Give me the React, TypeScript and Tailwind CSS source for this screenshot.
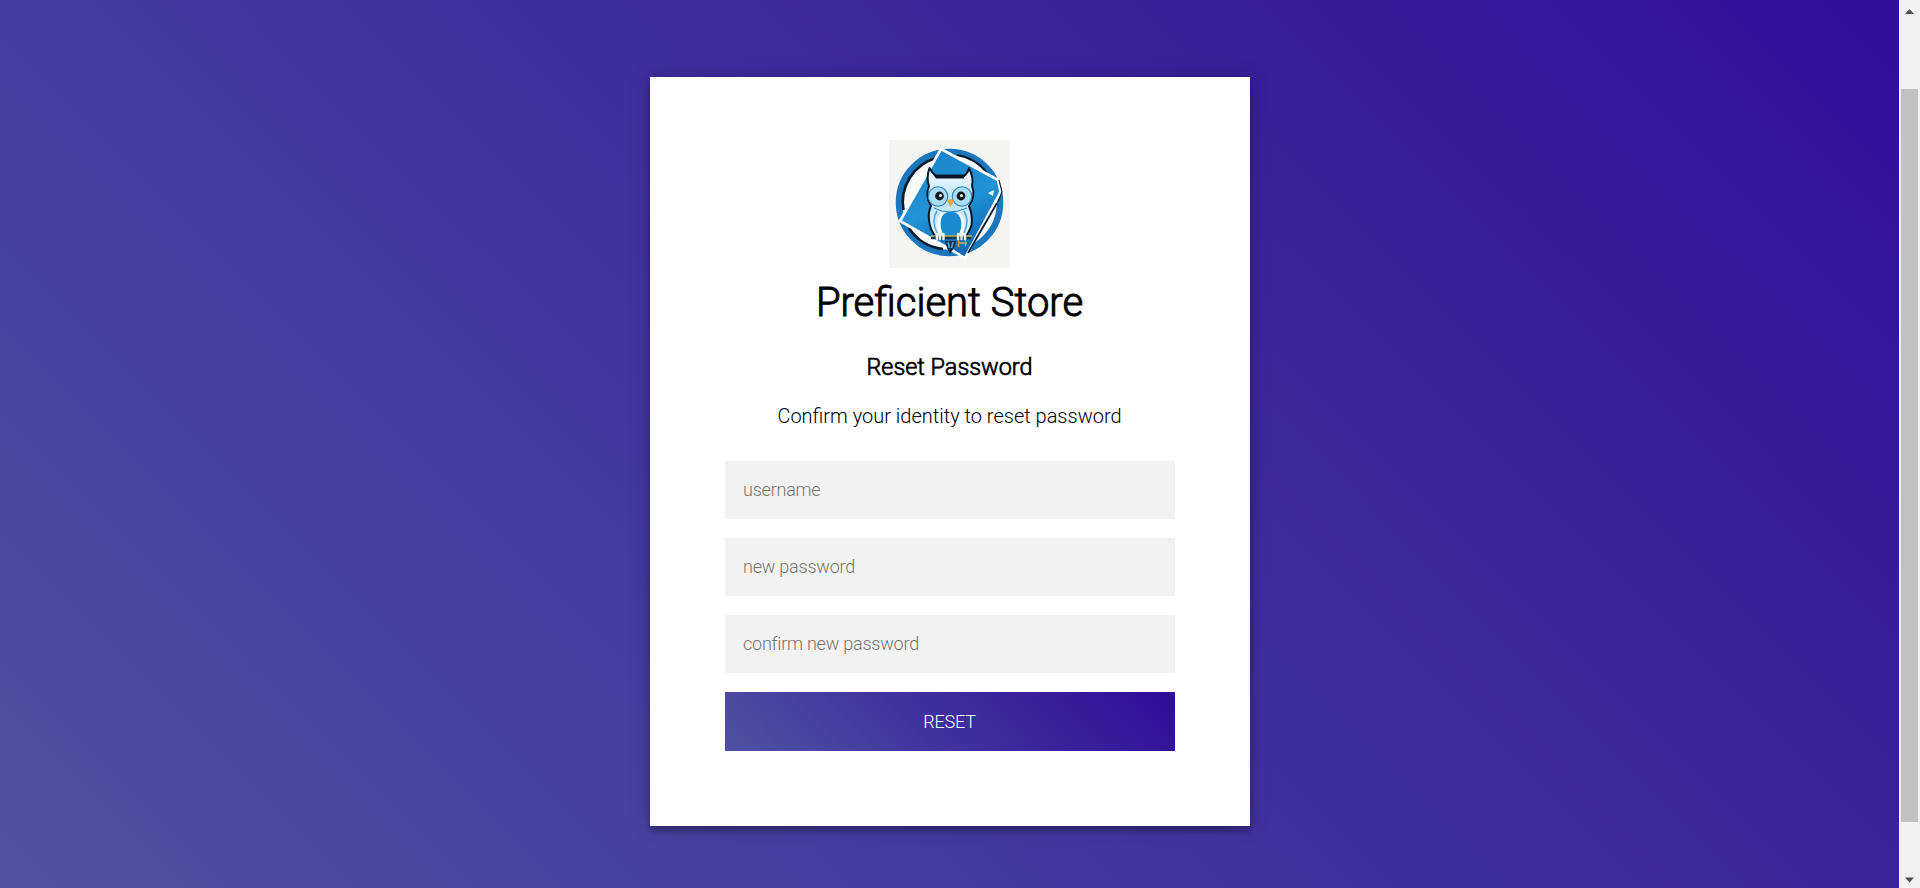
function Owl() {
  return (
    <svg viewBox="0 0 121 128" className="h-[128px] w-[121px] shrink-0" aria-hidden="true">
      <defs>
        <linearGradient id="card" x1="0.3" y1="0" x2="0.7" y2="1">
          <stop offset="0" stopColor="#1b84cc" />
          <stop offset="0.5" stopColor="#2193d6" />
          <stop offset="1" stopColor="#0d62ac" />
        </linearGradient>
        <linearGradient id="body" x1="0" y1="0" x2="0" y2="1">
          <stop offset="0" stopColor="#ffffff" />
          <stop offset="0.45" stopColor="#b5e2fa" />
          <stop offset="1" stopColor="#e8f7fe" />
        </linearGradient>
      </defs>
      <rect width="121" height="128" fill="#f4f4f2" />
      <circle cx="60.5" cy="62.5" r="50.5" fill="#fafafa" stroke="#1a76bd" strokeWidth="6.5" />
      <path d="M47 18 A46 46 0 0 0 14.500 70 M20 88 A46 46 0 0 0 54 109" fill="none" stroke="#0c1c2c" strokeWidth="2.6" />
      <path d="M68 15 A47 47 0 0 1 98 33" fill="none" stroke="#0c1c2c" strokeWidth="2" />
      <path d="M52 9 L109 40 L111.500 52 L76 118 L66 112 L11 81 Z" fill="url(#card)" stroke="#fff" strokeWidth="2.6" strokeLinejoin="round" />
      <path d="M108 63 L79 113" fill="none" stroke="#10202e" strokeWidth="1.8" />
      <path d="M110 40 L113 52 L109 62" fill="none" stroke="#10202e" strokeWidth="1.1" />
      <path d="M99 53 L105 50 L104 56 Z" fill="#e8f7fe" />
      <path d="M40.500 28 Q43 33 47 36 H75 Q79 33 80 28 Q85 38 83 46 Q87 56 80 66 Q84 75 82.500 85 Q80 93 76 97 L47 97 Q41 90 40 80 Q39 72 42 66 Q36 56 40 46 Q37 38 40.500 28 Z" fill="url(#body)" stroke="#0b1726" strokeWidth="2" strokeLinejoin="round" />
      <path d="M44 34.500 H77 L74.500 38.500 H47 Z" fill="#0b1726" />
      <path d="M45 68 Q60 76 78 68" fill="none" stroke="#2b7fb5" strokeWidth="1" />
      <path d="M53 76 Q62 67 71 76 Q75 87 69 96 H55 Q49 87 53 76 Z" fill="#1c8ad0" />
      <path d="M48 71 Q42 80 48 93 M75 71 Q81 80 75 93" fill="none" stroke="#4aa5dc" strokeWidth="1.5" />
      <path d="M53 73 Q47 82 52 93 M70 73 Q77 82 72 93" fill="none" stroke="#fff" strokeWidth="2.8" />
      <circle cx="49" cy="56.500" r="9.700" fill="#a9dcf6" stroke="#3183b5" strokeWidth="1.1" />
      <circle cx="73" cy="56.500" r="9.700" fill="#a9dcf6" stroke="#3183b5" strokeWidth="1.1" />
      <circle cx="50.500" cy="56" r="4.400" fill="#101820" />
      <circle cx="72" cy="56" r="4.400" fill="#101820" />
      <circle cx="51.500" cy="55.500" r="1.500" fill="#fff" />
      <circle cx="72.500" cy="55.500" r="1.500" fill="#fff" />
      <path d="M58 60.500 Q61.500 57.500 65 60.500 L61.500 67 Z" fill="#f2a531" />
      <path d="M42 98 H82" stroke="#173a58" strokeWidth="2.4" />
      <path d="M42 96 H83 M69 103 H78 M69.500 98 V107 M76.500 98 V106" stroke="#c4ac48" strokeWidth="1.4" fill="none" />
      <path d="M48 94 V99 M51 94 V99 M54.500 94 V99 M69 94 V99 M72.500 94 V99 M76 94 V99" stroke="#e6f6fd" strokeWidth="2.4" strokeLinecap="round" />
      <path d="M56 101 H67 L65 108 L61 114 L58 108 Z" fill="#12324f" />
      <path d="M59 102 L60.500 108 M64 102 L62.500 108" stroke="#4ea8de" strokeWidth="1.6" />
    </svg>
  );
}

function Field({ label, type = "text" }: { label: string; type?: string }) {
  return (
    <input
      type={type}
      placeholder={label}
      className="block h-[58.3px] w-full bg-[#f2f2f2] px-[18.5px] pb-[1px] text-[18px] font-light tracking-[-0.22px] text-black outline-none placeholder:text-[#757575]"
    />
  );
}

function Scrollbar() {
  return (
    <div className="flex h-full w-[21px] shrink-0 flex-col items-center bg-[#f1f1f1]">
      <svg viewBox="0 0 21 17" className="h-[17px] w-[21px]"><path d="M6 14 L10.5 9 L15 14 Z" fill="#505050" /></svg>
      <div className="mt-[72px] h-[733px] w-[17px] bg-[#c1c1c1]" />
      <div className="grow" />
      <svg viewBox="0 0 21 17" className="h-[17px] w-[21px]"><path d="M6 6.500 L10.5 11.500 L15 6.500 Z" fill="#505050" /></svg>
    </div>
  );
}

export default function App() {
  return (
    <div className="flex h-[888px] w-full overflow-hidden font-['Roboto',sans-serif]">
      <main className="flex grow justify-center bg-[linear-gradient(45deg,#4f51a2,#2f0c99)] bg-[length:100%_975px] bg-bottom pt-[77px]">
        <form className="flex h-[749px] w-[600px] flex-col items-center bg-white px-[75px] pt-[63px] text-center text-black shadow-[0_0_20px_0_rgba(0,0,0,0.2),0_5px_5px_0_rgba(0,0,0,0.24)]">
          <Owl />
          <h1 className="mt-[10px] text-[40px] leading-[50px] font-light [-webkit-text-stroke:1px_black]">Preficient Store</h1>
          <h2 className="mt-[24px] text-[23.4px] leading-[30px] font-light [-webkit-text-stroke:0.7px_black]">Reset Password</h2>
          <p className="mt-[20px] text-[20px] leading-[28px] font-light">Confirm your identity to reset password</p>
          <div className="mt-[31px] flex w-full flex-col gap-[18.8px]">
            <Field label="username" />
            <Field label="new password" type="password" />
            <Field label="confirm new password" type="password" />
            <button type="button" className="block h-[58.5px] w-full bg-[linear-gradient(45deg,#4f51a2,#2f0c99)] text-[18px] font-light tracking-[-0.2px] text-white">RESET</button>
          </div>
        </form>
      </main>
      <Scrollbar />
    </div>
  );
}
